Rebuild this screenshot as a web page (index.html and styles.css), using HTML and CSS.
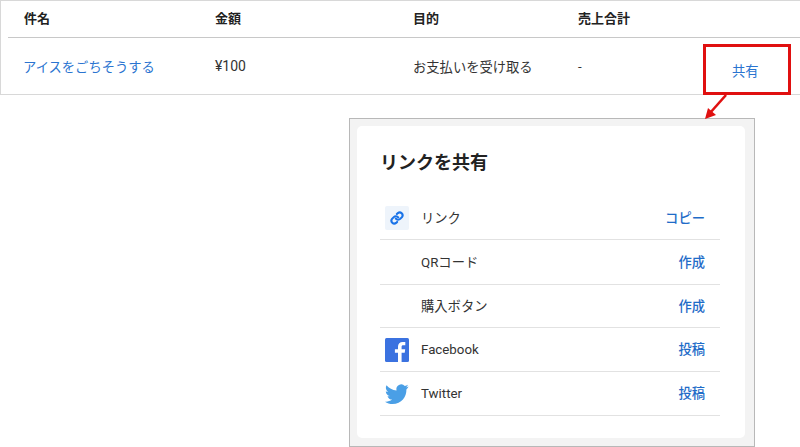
FILE: index.html
```html
<!DOCTYPE html>
<html lang="ja">

<head>
    <meta charset="UTF-8">
    <title>リンクを共有</title>
    <link rel="stylesheet" href="styles.css">
</head>

<body>
    <div class="table-box">
        <div class="table-row table-head">
            <div class="col-name">件名</div>
            <div class="col-price">金額</div>
            <div class="col-goal">目的</div>
            <div class="col-sales">売上合計</div>
        </div>
        <div class="table-row table-body">
            <div class="col-name"><a class="link">アイスをごちそうする</a></div>
            <div class="col-price">¥100</div>
            <div class="col-goal">お支払いを受け取る</div>
            <div class="col-sales">-</div>
            <div class="col-share"><a class="link">共有</a></div>
        </div>
    </div>

    <!-- red callout over the share link -->
    <div class="callout"></div>
    <svg class="arrow" width="40" height="40" viewBox="0 0 40 40">
        <path d="M25 1 L9 19" stroke="#e01010" stroke-width="2.6" fill="none" />
        <path d="M4 25 L7 14 L15 21 Z" fill="#e01010" />
    </svg>

    <div class="panel">
        <div class="card">
            <h2>リンクを共有</h2>
            <div class="share-row row-first">
                <span class="icon icon-link">
                    <svg width="14" height="14" viewBox="0 0 24 24" fill="none" stroke="#1a73e8" stroke-width="3.6" stroke-linecap="round">
                        <path d="M10 13a5 5 0 0 0 7.500.5l3-3a5 5 0 0 0-7-7l-1.700 1.700" />
                        <path d="M14 11a5 5 0 0 0-7.500-.5l-3 3a5 5 0 0 0 7 7l1.700-1.700" />
                    </svg>
                </span>
                <span class="label">リンク</span>
                <a class="action">コピー</a>
            </div>
            <div class="share-row row-qr">
                <span class="icon"></span>
                <span class="label">QRコード</span>
                <a class="action">作成</a>
            </div>
            <div class="share-row row-buy">
                <span class="icon"></span>
                <span class="label">購入ボタン</span>
                <a class="action">作成</a>
            </div>
            <div class="share-row">
                <span class="icon">
                    <svg width="24" height="24" viewBox="0 0 24 24">
                        <rect width="24" height="24" rx="1.500" fill="#3b72e0" />
                        <path d="M16.600 24 V14.800 H19.700 L20.200 11.200 H16.600 V8.900 C16.600 7.900 16.900 7.200 18.400 7.200 H20.300 V4 C20 4 18.900 3.900 17.600 3.900 C14.900 3.900 13 5.600 13 8.500 V11.200 H9.900 V14.800 H13 V24 Z" fill="#fff" />
                    </svg>
                </span>
                <span class="label">Facebook</span>
                <a class="action action-post">投稿</a>
            </div>
            <div class="share-row">
                <span class="icon">
                    <svg width="24" height="24" viewBox="0 0 24 24">
                        <path d="M23.600 4.600 c-.9.4-1.800.6-2.800.8 1-.6 1.800-1.500 2.100-2.700 -.9.6-2 1-3.100 1.200 A4.900 4.900 0 0 0 11.500 8.400 C7.500 8.200 3.900 6.300 1.500 3.300 .2 5.500.9 8.400 3 9.800 2.200 9.800 1.500 9.600.8 9.200 .8 11.500 2.400 13.600 4.700 14.100 4 14.300 3.300 14.300 2.500 14.200 3.100 16.200 5 17.600 7.100 17.600 5 19.200 2.400 20 0 19.700 2.200 21.100 4.800 22 7.500 22 16.600 22 21.700 14.300 21.400 7.400 22.300 6.700 23.100 5.700 23.600 4.600 Z" fill="#4a9fe6" />
                    </svg>
                </span>
                <span class="label">Twitter</span>
                <a class="action action-post">投稿</a>
            </div>
        </div>
    </div>
</body>

</html>
```

FILE: styles.css
```css
body {
    margin: 0;
    height: 447px;
    overflow: hidden;
    background-color: white;
    font-family: Roboto, "Noto Sans CJK JP", "Noto Sans", sans-serif;
    font-size: 13.3px;
    color: #333;
    position: relative;
}

.table-box {
    height: 95px;
    box-sizing: border-box;
    border: 1px solid #d8d8d8;
    border-right: none;
    padding-left: 7px;
}

.table-row {
    display: grid;
    grid-template-columns: 16px 191px 198px 165px 125px 1fr;
    align-items: center;
}

.table-head {
    height: 37px;
    border-bottom: 1px solid #c8c8c8;
    font-weight: 700;
    font-size: 13px;
    color: #222;
    padding-bottom: 3px;
    box-sizing: border-box;
}

.table-body {
    height: 56px;
}

.table-body .col-price {
    font-size: 14px;
}

.table-row > div:first-child {
    grid-column: 2;
}

.col-name {
    margin-right: -8px;
}

.table-body .col-name {
    margin-left: -1px;
}

.col-share {
    padding-top: 9px;
    padding-left: 29px;
}

.link {
    color: #2a74d0;
}

.callout {
    position: absolute;
    left: 703px;
    top: 44px;
    width: 82px;
    height: 45px;
    border: 3px solid #e01010;
}

.arrow {
    position: absolute;
    left: 701px;
    top: 94px;
}

.panel {
    margin: 23px 0 0 349px;
    width: 406px;
    height: 329px;
    box-sizing: border-box;
    padding: 7px 9px 8px 7px;
    background-color: #f3f3f3;
    border: 1px solid #b8b8b8;
}

.card {
    height: 100%;
    box-sizing: border-box;
    padding: 23px 25px 0 23px;
    background-color: white;
    border-radius: 5px;
}

h2 {
    margin: 0 0 20px 0;
    font-size: 18px;
    line-height: 27px;
    font-weight: 700;
    color: #222;
}

.share-row {
    display: flex;
    align-items: center;
    height: 44px;
    box-sizing: border-box;
    border-bottom: 1px solid #e2e2e2;
    padding-right: 15px;
}

.row-qr {
    height: 45px;
    padding-bottom: 2px;
}

.row-buy {
    height: 43px;
    padding-bottom: 2px;
}

.icon {
    width: 24px;
    height: 24px;
    margin-left: 5px;
    margin-right: 12px;
    display: flex;
    align-items: center;
    justify-content: center;
}

.icon-link {
    background-color: #eef4fb;
    border-radius: 2px;
}

.label {
    flex: 1;
}

.action {
    color: #1f6cc8;
    font-weight: 500;
}

.action-post {
    margin-bottom: 2px;
}
```
